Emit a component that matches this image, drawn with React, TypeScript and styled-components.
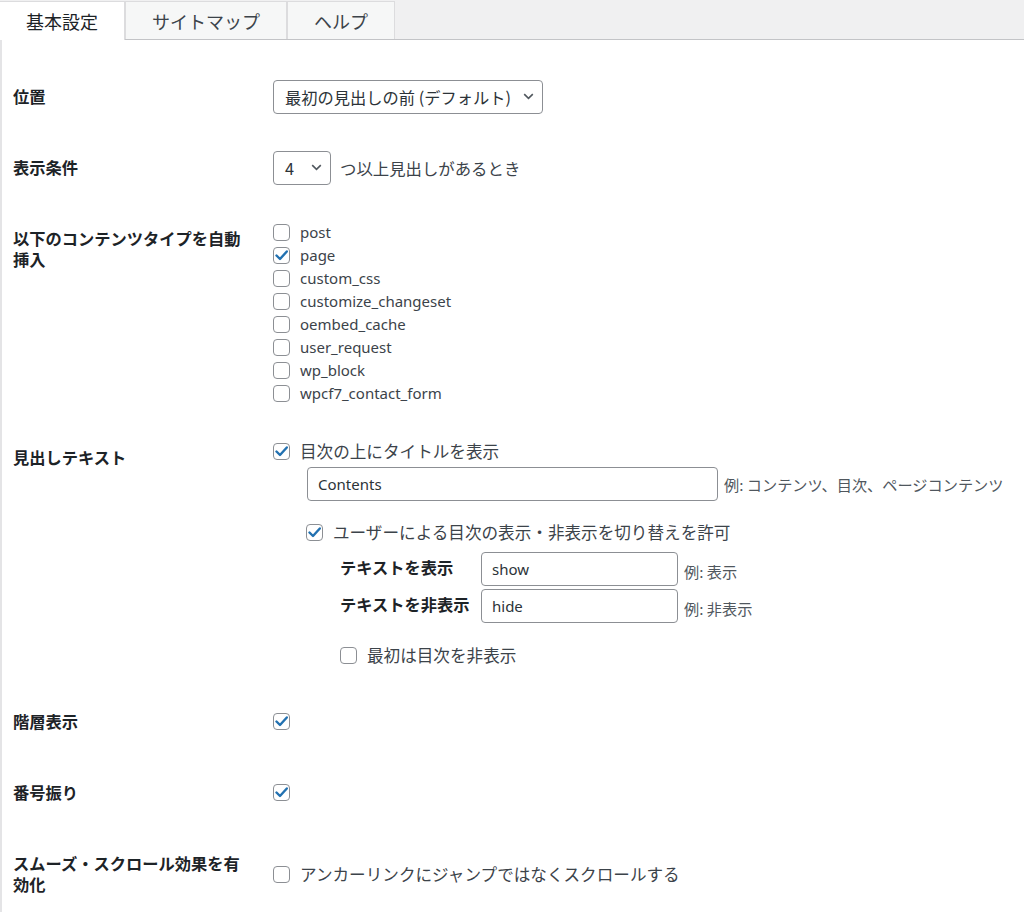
import React, { useState } from "react";
import styled, { createGlobalStyle } from "styled-components";

const GlobalStyle = createGlobalStyle`
  html, body {
    margin: 0;
    padding: 0;
    background: #ffffff;
  }
  body {
    font-family: "Noto Sans", "Noto Sans CJK JP", sans-serif;
    color: #1d2327;
  }
  * {
    box-sizing: border-box;
  }
`;

const Page = styled.div`
  width: 1024px;
  min-height: 912px;
  background: #ffffff;
`;

const TabBar = styled.div`
  display: flex;
  align-items: flex-end;
  height: 40px;
  background: #f0f0f1;
  border-bottom: 1px solid #c3c4c7;
`;

const Tab = styled.div<{ $active?: boolean }>`
  padding: 0 26px;
  display: flex;
  align-items: center;
  font-family: "Noto Sans CJK JP", sans-serif;
  font-size: 18px;
  color: ${(p) => (p.$active ? "#1d2327" : "#3c434a")};
  background: ${(p) => (p.$active ? "#ffffff" : "#f6f7f7")};
  border: 1px solid #dcdcde;
  border-bottom: none;
  margin-bottom: ${(p) => (p.$active ? "-1px" : "0")};
  height: ${(p) => (p.$active ? "39px" : "38px")};
  &:first-child {
    border-left: none;
  }
`;

const Content = styled.div`
  border-left: 2px solid #e4e4e6;
  padding: 21px 0 0 11px;
`;

const Row = styled.div<{ $pad?: number }>`
  display: flex;
  padding-top: ${(p) => p.$pad ?? 0}px;
`;

const Label = styled.div`
  width: 247px;
  padding: 25px 10px 25px 0;
  font-family: "Noto Sans CJK JP", sans-serif;
  font-weight: 700;
  font-size: 16.25px;
  line-height: 21px;
  color: #1d2327;
  flex-shrink: 0;
`;

const Cell = styled.div`
  flex: 1;
  padding: 17.5px 10px 17.5px 13px;
  display: flex;
  flex-direction: column;
  justify-content: center;
`;

const Inline = styled.div`
  display: flex;
  align-items: center;
  gap: 9px;
`;

const SelectBox = styled.div<{ $width: number }>`
  width: ${(p) => p.$width}px;
  height: 34px;
  border: 1px solid #8c8f94;
  border-radius: 4px;
  background: #fff;
  display: flex;
  align-items: center;
  justify-content: space-between;
  padding: 0 8px 0 11px;
  font-family: "Noto Sans CJK JP", sans-serif;
  font-size: 16.25px;
  color: #2c3338;
`;

const Text = styled.span`
  font-family: "Noto Sans CJK JP", sans-serif;
  font-size: 16.4px;
  color: #3c434a;
`;

const Hint = styled.span`
  font-family: "Noto Sans CJK JP", sans-serif;
  font-size: 15.2px;
  color: #50575e;
  white-space: nowrap;
`;

const CheckList = styled.div`
  display: flex;
  flex-direction: column;
`;

const CheckRow = styled.label<{ $indent?: number }>`
  display: flex;
  align-items: center;
  height: 23px;
  gap: 10px;
  margin-left: ${(p) => p.$indent ?? 0}px;
  font-family: "Noto Sans", "Noto Sans CJK JP", sans-serif;
  font-size: 15px;
  color: #3c434a;
  cursor: pointer;
`;

const JpText = styled.span`
  font-family: "Noto Sans CJK JP", sans-serif;
  font-size: 16.6px;
`;

const Box = styled.span`
  width: 17px;
  height: 17px;
  border: 1px solid #8c8f94;
  border-radius: 4px;
  background: #fff;
  display: inline-flex;
  align-items: center;
  justify-content: center;
  flex-shrink: 0;
`;

const TextInput = styled.input<{ $width: number }>`
  width: ${(p) => p.$width}px;
  height: 34px;
  border: 1px solid #8c8f94;
  border-radius: 4px;
  padding: 0 10px;
  font-family: "Noto Sans", sans-serif;
  font-size: 15px;
  color: #2c3338;
  background: #fff;
  &:focus {
    outline: none;
  }
`;

const FieldLine = styled.div<{ $indent: number; $top: number }>`
  display: flex;
  align-items: center;
  gap: 6px;
  margin-left: ${(p) => p.$indent}px;
  margin-top: ${(p) => p.$top}px;
`;

const SubTable = styled.div`
  display: grid;
  grid-template-columns: 141px auto 1fr;
  row-gap: 3px;
  align-items: center;
  margin: 8px 0 0 67px;
`;

const SubLabel = styled.span`
  font-family: "Noto Sans CJK JP", sans-serif;
  font-weight: 700;
  font-size: 16.25px;
  color: #1d2327;
  margin-top: -4px;
`;

const SubHint = styled(Hint)`
  margin-left: 6px;
  margin-top: 4px;
`;

const Spacer = styled.div<{ $h: number }>`
  height: ${(p) => p.$h}px;
`;

function Chevron() {
  return (
    <svg width="11" height="7" viewBox="0 0 11 7">
      <path d="M1.2 1.2 L5.5 5.3 L9.8 1.2" fill="none" stroke="#50575e" strokeWidth="1.6" />
    </svg>
  );
}

function Check({
  label,
  checked,
  indent,
}: {
  label?: string;
  checked?: boolean;
  indent?: number;
}) {
  const [on, setOn] = useState(!!checked);
  const isJp = label ? /[^\x00-\x7f]/.test(label) : false;
  return (
    <CheckRow $indent={indent} onClick={() => setOn(!on)}>
      <Box>
        {on ? (
          <svg width="13" height="11" viewBox="0 0 13 11">
            <path
              d="M1.5 5.5 L5 9 L11.8 1.5"
              fill="none"
              stroke="#2271b1"
              strokeWidth="2.4"
              strokeLinecap="round"
              strokeLinejoin="round"
            />
          </svg>
        ) : null}
      </Box>
      {label ? isJp ? <JpText>{label}</JpText> : <span>{label}</span> : null}
    </CheckRow>
  );
}

const postTypes = [
  { name: "post", checked: false },
  { name: "page", checked: true },
  { name: "custom_css", checked: false },
  { name: "customize_changeset", checked: false },
  { name: "oembed_cache", checked: false },
  { name: "user_request", checked: false },
  { name: "wp_block", checked: false },
  { name: "wpcf7_contact_form", checked: false },
];

export default function App() {
  return (
    <Page>
      <GlobalStyle />
      <TabBar>
        <Tab $active>基本設定</Tab>
        <Tab>サイトマップ</Tab>
        <Tab>ヘルプ</Tab>
      </TabBar>
      <Content>
        <Row>
          <Label>位置</Label>
          <Cell>
            <SelectBox $width={270}>
              <span>最初の見出しの前 (デフォルト)</span>
              <Chevron />
            </SelectBox>
          </Cell>
        </Row>
        <Row>
          <Label>表示条件</Label>
          <Cell>
            <Inline>
              <SelectBox $width={58}>
                <span>4</span>
                <Chevron />
              </SelectBox>
              <Text>つ以上見出しがあるとき</Text>
            </Inline>
          </Cell>
        </Row>
        <Row>
          <Label>以下のコンテンツタイプを自動挿入</Label>
          <Cell>
            <CheckList>
              {postTypes.map((t) => (
                <Check key={t.name} label={t.name} checked={t.checked} />
              ))}
            </CheckList>
          </Cell>
        </Row>
        <Row>
          <Label>見出しテキスト</Label>
          <Cell>
            <Check label="目次の上にタイトルを表示" checked />
            <FieldLine $indent={34} $top={4}>
              <TextInput $width={411} defaultValue="Contents" />
              <Hint>例: コンテンツ、目次、ページコンテンツ</Hint>
            </FieldLine>
            <Spacer $h={20} />
            <Check
              label="ユーザーによる目次の表示・非表示を切り替えを許可"
              checked
              indent={33}
            />
            <SubTable>
              <SubLabel>テキストを表示</SubLabel>
              <TextInput $width={197} defaultValue="show" />
              <SubHint>例: 表示</SubHint>
              <SubLabel>テキストを非表示</SubLabel>
              <TextInput $width={197} defaultValue="hide" />
              <SubHint>例: 非表示</SubHint>
            </SubTable>
            <Spacer $h={21} />
            <Check label="最初は目次を非表示" indent={67} />
          </Cell>
        </Row>
        <Row $pad={2}>
          <Label>階層表示</Label>
          <Cell>
            <Check checked />
          </Cell>
        </Row>
        <Row>
          <Label>番号振り</Label>
          <Cell>
            <Check checked />
          </Cell>
        </Row>
        <Row>
          <Label>スムーズ・スクロール効果を有効化</Label>
          <Cell>
            <Check label="アンカーリンクにジャンプではなくスクロールする" />
          </Cell>
        </Row>
      </Content>
    </Page>
  );
}
